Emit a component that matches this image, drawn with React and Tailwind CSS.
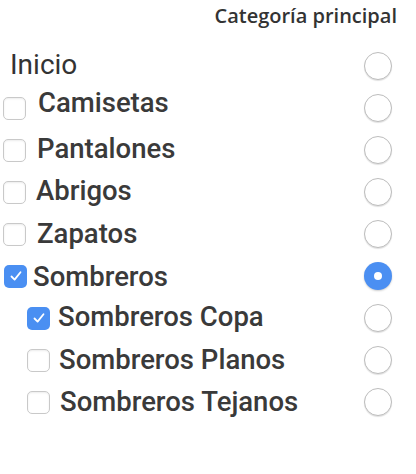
import React from 'react'

const items = [
  { label: 'Inicio', kind: 'root' },
  { label: 'Camisetas', box: 'ml-[3px]', gap: 'ml-[12px]', text: '-mt-[10px]' },
  { label: 'Pantalones', box: 'ml-[3px]', gap: 'ml-[11px]', text: '-mt-[2px]' },
  { label: 'Abrigos', box: 'ml-[3px]', gap: 'ml-[10px]', text: '-mt-[2px]' },
  { label: 'Zapatos', box: 'ml-[3px]', gap: 'ml-[11px]', text: 'mt-0' },
  { label: 'Sombreros', box: 'ml-[4px]', gap: 'ml-[6px]', text: 'mt-[2px]', checked: true, primary: true },
  { label: 'Sombreros Copa', box: 'ml-[27px]', gap: 'ml-[8px]', text: '-mt-[3px]', checked: true },
  { label: 'Sombreros Planos', box: 'ml-[27px]', gap: 'ml-[9px]', text: '-mt-[1px]' },
  { label: 'Sombreros Tejanos', box: 'ml-[27px]', gap: 'ml-[10px]', text: '-mt-[1px]' },
]

function Checkbox({ checked }) {
  if (checked) {
    return (
      <span className="w-[23px] h-[23px] rounded-[5px] bg-[#4a8ff2] flex items-center justify-center shrink-0">
        <svg width="14" height="14" viewBox="0 0 14 14" fill="none">
          <path d="M2.5 7.5 L5.6 10.6 L11.5 3.2" stroke="white" strokeWidth="1.8" strokeLinecap="round" strokeLinejoin="round" />
        </svg>
      </span>
    )
  }
  return (
    <span className="block w-[23px] h-[23px] rounded-[5px] border border-[#c9c9c9] bg-white shadow-[inset_0_1px_2px_rgba(0,0,0,0.08)] shrink-0" />
  )
}

function Radio({ on }) {
  if (on) {
    return (
      <span className="w-[28px] h-[28px] rounded-full bg-[#4b8ff2] flex items-center justify-center shadow-[0_1px_2px_rgba(0,0,0,0.2)]">
        <span className="w-[8px] h-[8px] rounded-full bg-white" />
      </span>
    )
  }
  return (
    <span className="block w-[28px] h-[28px] rounded-full border-[1.5px] border-[#bdbdbd] bg-white shadow-[0_1px_1px_rgba(0,0,0,0.12)]" />
  )
}

export default function App() {
  return (
    <div className="w-[416px] h-[474px] bg-white text-[#3a3a3a] font-['Roboto',sans-serif]">
      {/* header */}
      <div className="h-[45px] pt-[3px] pr-[19px] flex justify-end">
        <span className="font-['Open_Sans',sans-serif] font-semibold text-[20px] leading-[26px] text-[#333]">
          Categoría principal
        </span>
      </div>

      {items.map((it) => (
        <div key={it.label} className="h-[42px] flex items-center justify-between pr-[24px]">
          {it.kind === 'root' ? (
            <span className="ml-[10px] text-[28px] leading-[32px] -mt-[2px] text-[#333]">{it.label}</span>
          ) : (
            <div className="flex items-center">
              <span className={`flex ${it.box}`}>
                <Checkbox checked={it.checked} />
              </span>
              <span className={`${it.gap} ${it.text} text-[27.5px] leading-[30px] font-medium`}>{it.label}</span>
            </div>
          )}
          <Radio on={it.primary} />
        </div>
      ))}
    </div>
  )
}
